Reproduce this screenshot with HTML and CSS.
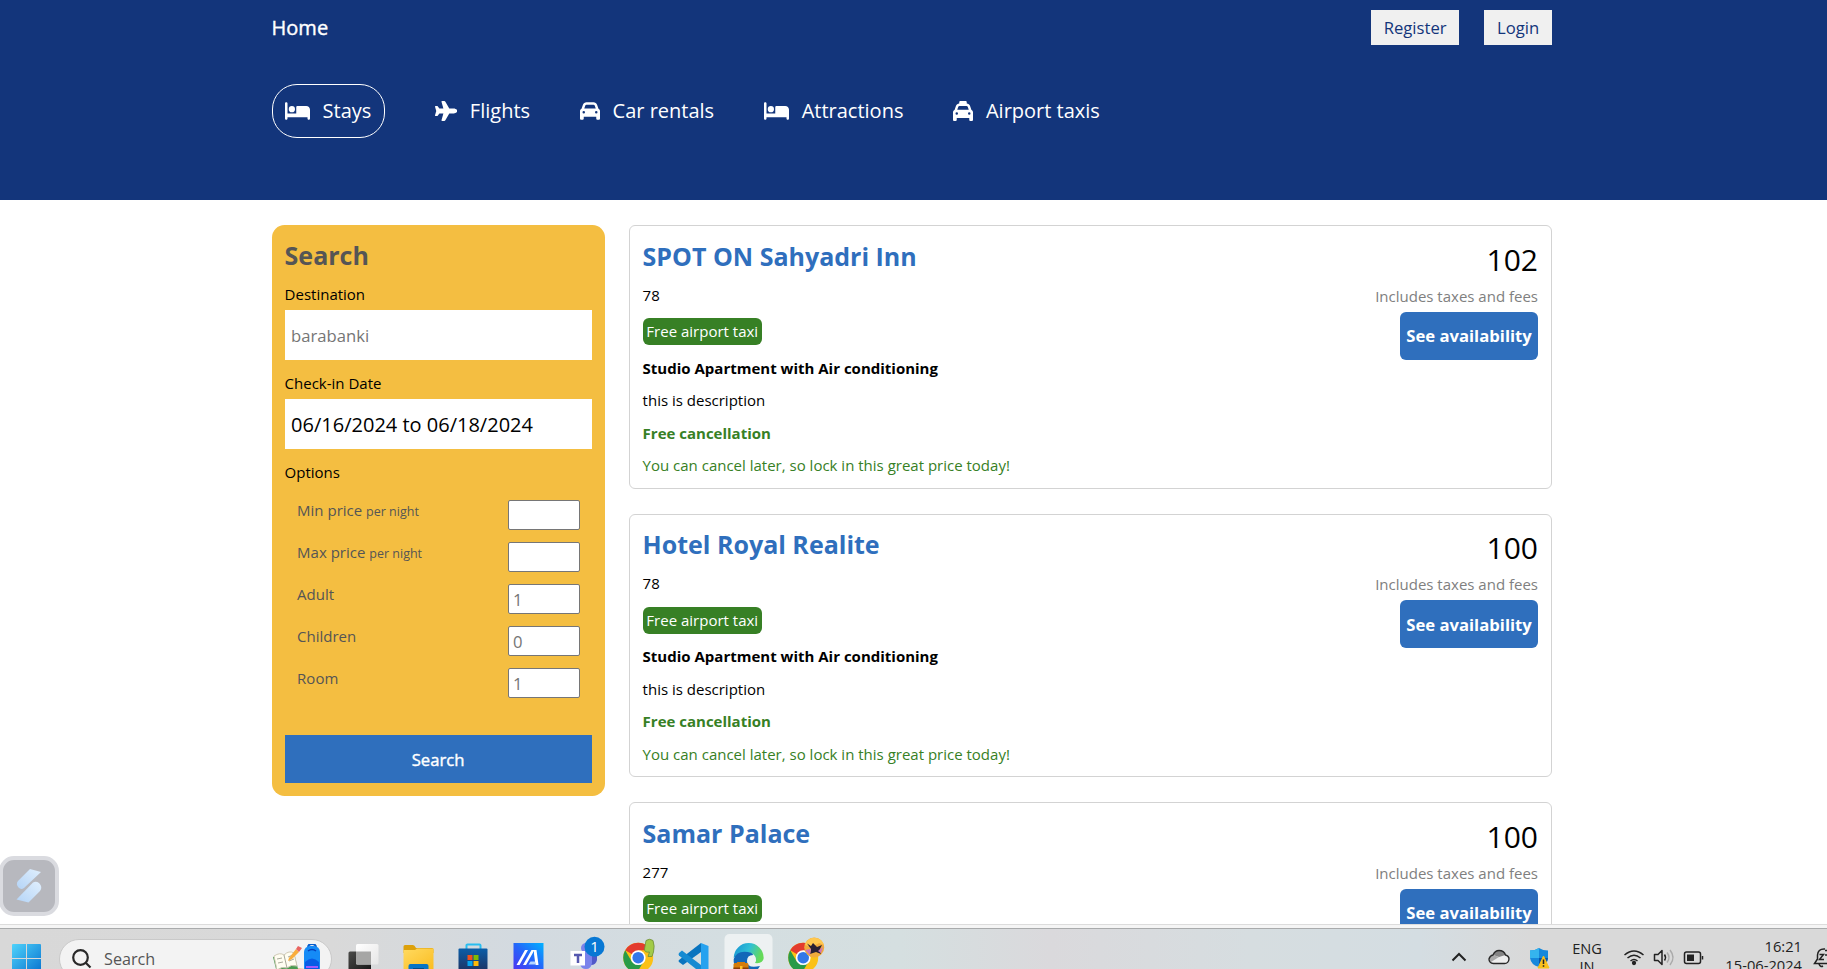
FILE: index.html
```html
<!DOCTYPE html>
<html lang="en">
<head>
<meta charset="utf-8">
<title>Hotels</title>
<link rel="stylesheet" href="styles.css">
</head>
<body>
<div class="viewport">
  <header class="header">
    <div class="container">
      <nav class="navbar">
        <span class="brand">Home</span>
        <div class="nav-actions"><button class="nav-button">Register</button><button class="nav-button login">Login</button></div>
      </nav>
      <div class="tabs">
        <div class="tab active"><svg width="25" height="20" viewBox="0 0 640 512"><path d="M32 32c17.7 0 32 14.3 32 32V320H288V160c0-17.7 14.3-32 32-32H544c53 0 96 43 96 96V448c0 17.7-14.3 32-32 32s-32-14.3-32-32V416H64v32c0 17.7-14.3 32-32 32s-32-14.3-32-32V64C0 46.3 14.3 32 32 32zm144 96a80 80 0 1 1 0 160 80 80 0 1 1 0-160z"/></svg><span>Stays</span></div>
        <div class="tab"><svg width="22.5" height="20" viewBox="0 0 576 512"><path d="M482.3 192c34.2 0 93.7 29 93.7 64c0 36-59.5 64-93.7 64l-116.6 0L265.2 495.9c-5.7 10-16.3 16.1-27.8 16.1l-56.2 0c-10.6 0-18.3-10.2-15.4-20.4l49-171.6L112 320 68.8 377.6c-3 4-7.8 6.4-12.8 6.4l-42 0c-7.8 0-14-6.3-14-14c0-1.3 .2-2.6 .5-3.9L32 256 .5 145.9c-.4-1.3-.5-2.6-.5-3.9c0-7.8 6.3-14 14-14l42 0c5 0 9.8 2.4 12.8 6.4L112 192l102.9 0-49-171.6C162.9 10.2 170.6 0 181.2 0l56.2 0c11.5 0 22.1 6.2 27.8 16.1L365.7 192l116.6 0z"/></svg><span>Flights</span></div>
        <div class="tab"><svg width="20" height="20" viewBox="0 0 512 512"><path d="M135.2 117.4L109.1 192H402.9l-26.1-74.6C372.3 104.6 360.2 96 346.6 96H165.4c-13.6 0-25.7 8.6-30.2 21.4zM39.6 196.8L74.8 96.3C88.3 57.8 124.6 32 165.4 32H346.6c40.8 0 77.1 25.8 90.6 64.3l35.2 100.5c23.2 9.6 39.6 32.5 39.6 59.2V400v48c0 17.7-14.3 32-32 32H448c-17.7 0-32-14.3-32-32V400H96v48c0 17.7-14.3 32-32 32H32c-17.7 0-32-14.3-32-32V400 256c0-26.7 16.4-49.6 39.6-59.2zM128 288a32 32 0 1 0 -64 0 32 32 0 1 0 64 0zm288 32a32 32 0 1 0 0-64 32 32 0 1 0 0 64z"/></svg><span>Car rentals</span></div>
        <div class="tab"><svg width="25" height="20" viewBox="0 0 640 512"><path d="M32 32c17.7 0 32 14.3 32 32V320H288V160c0-17.7 14.3-32 32-32H544c53 0 96 43 96 96V448c0 17.7-14.3 32-32 32s-32-14.3-32-32V416H64v32c0 17.7-14.3 32-32 32s-32-14.3-32-32V64C0 46.3 14.3 32 32 32zm144 96a80 80 0 1 1 0 160 80 80 0 1 1 0-160z"/></svg><span>Attractions</span></div>
        <div class="tab"><svg width="20" height="20" viewBox="0 0 512 512"><path d="M192 0c-17.7 0-32 14.3-32 32V64v.2c-38.6 2.2-72.3 27.3-85.2 64.1L39.6 228.8C16.4 238.4 0 261.3 0 288V432v48c0 17.7 14.3 32 32 32H64c17.7 0 32-14.3 32-32V432H416v48c0 17.7 14.3 32 32 32h32c17.7 0 32-14.3 32-32V432 288c0-26.7-16.4-49.6-39.6-59.2L437.2 128.3c-12.9-36.8-46.6-62-85.2-64.1V64 32c0-17.7-14.3-32-32-32H192zM165.4 128H346.6c13.6 0 25.7 8.6 30.2 21.4L402.9 224H109.1l26.1-74.6c4.5-12.8 16.6-21.4 30.2-21.4zM96 288a32 32 0 1 1 0 64 32 32 0 1 1 0-64zm288 32a32 32 0 1 1 64 0 32 32 0 1 1 -64 0z"/></svg><span>Airport taxis</span></div>
      </div>
    </div>
  </header>

  <main class="container content">
    <aside class="search">
      <h1 class="search-title">Search</h1>
      <div class="field"><label>Destination</label><input class="text-input" type="text" placeholder="barabanki"></div>
      <div class="field"><label>Check-in Date</label><div class="date-box">06/16/2024 to 06/18/2024</div></div>
      <div class="field">
        <label>Options</label>
        <div class="options">
          <div class="option"><span>Min price <small>per night</small></span><input type="text"></div>
          <div class="option"><span>Max price <small>per night</small></span><input type="text"></div>
          <div class="option"><span>Adult</span><input type="text" placeholder="1"></div>
          <div class="option"><span>Children</span><input type="text" placeholder="0"></div>
          <div class="option"><span>Room</span><input type="text" placeholder="1"></div>
        </div>
      </div>
      <button class="search-button">Search</button>
    </aside>

    <section class="results">
      <article class="hotel">
        <div class="info"><h2>SPOT ON Sahyadri Inn</h2><span>78</span><span class="badge">Free airport taxi</span><b>Studio Apartment with Air conditioning</b><span>this is description</span><b class="green">Free cancellation</b><span class="green">You can cancel later, so lock in this great price today!</span></div>
        <div class="offer"><span class="price">102</span><span class="tax">Includes taxes and fees</span><button class="check">See availability</button></div>
      </article>
      <article class="hotel">
        <div class="info"><h2>Hotel Royal Realite</h2><span>78</span><span class="badge">Free airport taxi</span><b>Studio Apartment with Air conditioning</b><span>this is description</span><b class="green">Free cancellation</b><span class="green">You can cancel later, so lock in this great price today!</span></div>
        <div class="offer"><span class="price">100</span><span class="tax">Includes taxes and fees</span><button class="check">See availability</button></div>
      </article>
      <article class="hotel">
        <div class="info"><h2>Samar Palace</h2><span>277</span><span class="badge">Free airport taxi</span></div>
        <div class="offer"><span class="price">100</span><span class="tax">Includes taxes and fees</span><button class="check">See availability</button></div>
      </article>
    </section>
  </main>

  <div class="widget">
    <svg width="60" height="60" viewBox="0 0 60 60">
      <defs><linearGradient id="wg" x1="0" y1="1" x2="1" y2="0"><stop offset="0" stop-color="#b4d4f7"/><stop offset="1" stop-color="#e0effd"/></linearGradient></defs>
      <path d="M31 13L42 16 25 32Q22 34 19.500 31.500 16.500 28 19 25Z" fill="url(#wg)"/>
      <path d="M17.500 43.500L34 26.500Q37 25 40 27 44 31 41 35L29.500 46.500Z" fill="url(#wg)"/>
    </svg>
  </div>
</div>

<div class="window-edge"></div>
<footer class="taskbar">
  <svg class="start" width="30" height="41" viewBox="0 0 30 41">
    <defs><linearGradient id="st" gradientUnits="userSpaceOnUse" x1="0" y1="16" x2="29" y2="45"><stop offset="0" stop-color="#4fd3fb"/><stop offset="1" stop-color="#0872cf"/></linearGradient></defs>
    <path d="M1 16H14V30H0V17Q0 16 1 16ZM15 16H28Q29 16 29 17V30H15ZM0 31H14V41H0ZM15 31H29V41H15Z" fill="url(#st)"/>
  </svg>
  <div class="task-search">
    <svg width="20" height="20" viewBox="0 0 20 20" fill="none" stroke="#292929" stroke-width="2.2"><circle cx="8.500" cy="8.500" r="7.300"/><path d="M13.500 13.500L18.500 18.500"/></svg>
    <span>Search</span>
    <svg class="doodle" width="60" height="30" viewBox="0 0 60 30">
      <path d="M0 30Q9 24 22 24 42 24 52 30Z" fill="#e9bd86"/>
      <path d="M4 13L25 9 29 25 8 29Z" fill="#4b9b50"/><path d="M5 12Q11 8 15 11 20 6 25 9L28 22Q22 20 18 24 13 22 8 26Z" fill="#fffdf1" stroke="#cfc9b6"/><path d="M15 11L18 24M8 15L13 14M9 19L14 18M19 13L24 11M20 17L25 15" stroke="#a9a99b"/>
      <path d="M20 14L27 5 30 8 23 15 19 17Z" fill="#f9ad3d"/><path d="M27 5L29 2 33 4 30 8Z" fill="#e96462"/>
      <path d="M39 4Q39 0 43 0T47 4" fill="none" stroke="#075ccc" stroke-width="2"/><rect x="35" y="2" width="16" height="28" rx="6" fill="#158bf6"/><path d="M39 7Q43 4 47 7" fill="none" stroke="#063fbc" stroke-width="1.500"/><path d="M36 18Q43 11 50 18V30H36Z" fill="#075ce5"/><path d="M37 23H49" stroke="#9f5bff" stroke-width="2"/>
    </svg>
  </div>
  <div class="apps">
    <svg class="app" viewBox="0 0 55 41"><defs><linearGradient id="tv" x2="1" y2="1"><stop stop-color="#4b4b49"/><stop offset="1" stop-color="#151515"/></linearGradient><linearGradient id="tw" x2="1" y2="1"><stop stop-color="#fff"/><stop offset="1" stop-color="#e6e6e6"/></linearGradient></defs><rect x="12.500" y="23.500" width="22.500" height="20" rx="1.500" fill="url(#tv)"/><rect x="20" y="16" width="22.500" height="20.500" rx="1.500" fill="url(#tw)"/><path d="M20 23.500H35V36.500H21.500Q20 36.500 20 35Z" fill="#a6a6a5"/></svg>
    <svg class="app" viewBox="0 0 55 41"><defs><linearGradient id="fo" x2="1" y2="1"><stop stop-color="#ffda60"/><stop offset="1" stop-color="#fbbd22"/></linearGradient></defs><path d="M12.500 18.500Q12.500 17 14 17H22Q23.500 17 25 20H41Q42.500 20 42.500 21.500V25H12.500Z" fill="#dda10b"/><path d="M12.500 22H24L26 20.500H42.500V41H12.500Z" fill="url(#fo)"/><path d="M17.500 41V38Q17.500 36 19.500 36H35.500Q37.500 36 37.500 38V41Z" fill="#0874c6"/><path d="M22 41V40H33V41Z" fill="#064c86"/></svg>
    <svg class="app" viewBox="0 0 55 41"><defs><linearGradient id="ms" x2="0" y2="1"><stop stop-color="#0b5ea8"/><stop offset="1" stop-color="#1c3769"/></linearGradient></defs><path d="M20.500 22V17Q20.500 16.500 21.500 16.500H33.500Q34.500 16.500 34.500 17.500V22" fill="none" stroke="#29bdf0" stroke-width="2"/><path d="M12.500 21.500Q12.500 20.500 13.500 20.500H40.500Q41.500 20.500 41.500 21.500V41H12.500Z" fill="url(#ms)"/><path fill="#f1511b" d="M21.500 27h5v5h-5z"/><path fill="#80bb00" d="M27.500 27h5v5h-5z"/><path fill="#05a6f0" d="M21.500 33h5v5h-5z"/><path fill="#ffba08" d="M27.500 33h5v5h-5z"/></svg>
    <svg class="app" viewBox="0 0 55 41"><defs><linearGradient id="ma" x1="0" y1="1" x2="1" y2="0"><stop stop-color="#4b35f2"/><stop offset=".5" stop-color="#2467fa"/><stop offset="1" stop-color="#00b2ff"/></linearGradient></defs><path d="M12.500 15H42.500V41H12.500Z" fill="url(#ma)"/><path d="M15.500 37L24 22H27L18.500 37ZM22 37L30.500 22H33.500L25 37ZM33 22H35.500L37.500 37H34.500L33 26Z" fill="#fff"/><path d="M29.500 33.500H34V36.500H27.500Z" fill="#b4d5ff"/></svg>
    <svg class="app" viewBox="0 0 55 41"><circle cx="30" cy="20" r="5" fill="#7b83eb"/><path d="M34 25H41V32Q40 37 35 37Z" fill="#5059c9"/><path d="M24 25H36V35Q35 41 30 41 25 41 24 36Z" fill="#7b83eb"/><rect x="14.500" y="23" width="14.500" height="14.500" fill="#fff"/><path d="M18 27H26M22 27V35" stroke="#5558af" stroke-width="2.500"/><circle cx="38.500" cy="18.700" r="10" fill="#0878d4"/><text x="38.500" y="24" text-anchor="middle" class="badge-text">1</text></svg>
    <svg class="app" viewBox="0 0 55 41"><g id="chrome"><circle cx="27.200" cy="29.700" r="15" fill="#fbc116"/><path d="M27.200 29.700L14.200 22.200A15 15 0 0 1 40.200 22.200H27.200Z" fill="#e33b2e"/><path d="M14.200 22.200A15 15 0 0 0 26 44.600L33 33 27.200 29.700 20.700 33.500Z" fill="#289b48"/><circle cx="27.200" cy="29.700" r="7.400" fill="#fff"/><circle cx="27.200" cy="29.700" r="5.800" fill="#3478e8"/></g><path d="M35 12.500Q38.500 10 42 12.500 44 18 42.500 24L41 28.500H37L38.500 24Q33.500 25 33.500 21Z" fill="#a2cb48" stroke="#6d8d39" stroke-width=".8"/></svg>
    <svg class="app" viewBox="0 0 55 41"><path d="M35 15L42.500 18V41H35Z" fill="#26a2ef"/><path d="M35 15V24L17 37 13 34Q12 33 13 32Z" fill="#0874bf"/><path d="M13 25L16 22.500 35 37V41H30L13 27.500Q12 26 13 25Z" fill="#168bd2"/></svg>
    <svg class="app" viewBox="0 0 55 41"><defs><linearGradient id="ed" x2="1" y2=".3"><stop stop-color="#1591d3"/><stop offset=".55" stop-color="#2fbfd5"/><stop offset="1" stop-color="#65da59"/></linearGradient></defs><rect x="3.500" y="6" width="48" height="45" rx="5" fill="#edf1f2"/><path d="M12.700 30A15 15 0 0 1 42.700 30Q42 36 34 35 37 30 32 26 22 21 12.700 30Z" fill="url(#ed)"/><path d="M12.700 31Q16 22 27 24 32 25 32 27 26 27 26 33 26 41 39 38L37 41H17Q12 37 12.700 31Z" fill="#1267b8"/><path d="M12.500 36.500Q12.500 35 14 35H16V34H24V35H26Q27.500 35 27.500 36.500V41H12.500Z" fill="#d47c0b"/><path d="M12.500 39.500H27.500V41H12.500Z" fill="#8b3c08"/><path d="M19 38h2.500v3H19z" fill="#ffc328"/></svg>
    <svg class="app" viewBox="0 0 55 41"><use href="#chrome"/><circle cx="38.200" cy="19.500" r="10" fill="#f1aa3d"/><path d="M29 17Q31 10 38 9.700 46 10 48 17L43 15 36 19Z" fill="#ffc84f"/><path d="M31 15.500L35 18 37 15 41 19 46 17 43.500 22 45 26 40 24 34 26 35 21Z" fill="#292034"/><path d="M29 22L35 21 34 27ZM42 23L47 19 45 25Z" fill="#cb75bb"/></svg>
  </div>
  <div class="tray">
    <svg width="40" height="41" viewBox="0 0 40 41"><path d="M13.500 32.500L20 26 26.500 32.500" fill="none" stroke="#222" stroke-width="2"/></svg>
    <svg width="40" height="41" viewBox="0 0 40 41"><path d="M14.500 35.500Q10 35 10 31 11 27.500 14 27 16 22.500 20 22.500 25 22.500 26.500 27 30 28 30 31 29.500 35.500 25.500 35.500Z" fill="#eee"/><path d="M14 27Q16 22.500 20 22.500 25 22.500 26.500 27L20 29Z" fill="#858585"/><path d="M11 33Q10 28 14 27L20 29 12 34Z" fill="#aaa"/><path d="M14.500 35.500Q10 35 10 31 11 27.500 14 27 16 22.500 20 22.500 25 22.500 26.500 27 30 28 30 31 29.500 35.500 25.500 35.500Z" fill="none" stroke="#292929" stroke-width="1.400"/></svg>
    <svg width="40" height="41" viewBox="0 0 40 41"><path d="M20 20Q24 22.500 29 22.500V31Q28 37 20 39 12 37 11 30V22.500Q16 22.500 20 20Z" fill="#1688dc"/><path d="M20 20Q16 22.500 11 22.500V30H20Z" fill="#35b4ee"/><path d="M20 30H29Q28 37 20 39Z" fill="#0b55a6"/><path d="M24.500 28L30 40H19Z" fill="#fbc11b" stroke="#fbc11b" stroke-linejoin="round"/><path d="M24.500 31.500V36M24.500 37.200V38.800" stroke="#222" stroke-width="1.500"/></svg>
    <div class="lang"><span>ENG</span><span>IN</span></div>
    <svg width="95" height="41" viewBox="0 0 95 41" fill="none" stroke="#222" stroke-width="1.500"><path d="M9.500 27Q19 19 28.500 27M12.500 30Q19 24.500 25.500 30M15.500 33Q19 30 22.500 33" /><circle cx="19" cy="35" r="1.400" fill="#222"/><path d="M39.500 26.500H43L47 22.500V36.500L43 32.500H39.500Z" stroke-linejoin="round"/><path d="M49.500 26.500Q51.500 29.500 49.500 32.500"/><path d="M52 24.500Q56 29.500 52 34.500M55 22Q61 29.500 55 37" stroke="#aaa"/><rect x="69.500" y="24" width="16" height="11.500" rx="2"/><path d="M72 26.500H79V33H72Z" fill="#222" stroke="none"/><path d="M87.500 28V31.500"/></svg>
    <div class="clock"><span>16:21</span><span>15-06-2024</span></div>
    <svg class="bell" width="14" height="41" viewBox="0 0 14 41" fill="none" stroke="#222" stroke-width="1.500"><path d="M12 21Q5 20.500 4.500 27V31L1.500 35.500H14M6 36Q7.500 39.500 10 38"/><path d="M6.500 26.500H10.500L6.500 31.500H11M12 22.500H14M12 27H14"/></svg>
  </div>
</footer>
</body>
</html>
```
FILE: styles.css
```css
* { box-sizing: border-box; }
body { margin: 0; height: 969px; overflow: hidden; display: flex; flex-direction: column; background: #fff; font-family: "Open Sans", "Noto Sans", sans-serif; font-size: 15px; color: #000; }
button, input { font-family: inherit; }
h1, h2 { margin: 0; }
svg { display: block; flex: none; }
.viewport { position: relative; height: 924px; flex: none; overflow: hidden; }
.container { width: 1280px; margin: 0 0 0 271.6px; }
.header { height: 200px; background: #13357b; color: #fff; }
.navbar { height: 55px; display: flex; align-items: center; justify-content: space-between; }
.brand { font-size: 20px; font-weight: 500; -webkit-text-stroke: 0.4px #fff; }
.nav-actions { display: flex; gap: 25px; }
.nav-button { width: 88px; height: 35px; border: 0; padding: 0 0 0 1px; background: #f0f0f0; color: #13357b; font-size: 16.67px; }
.nav-button.login { width: 68px; }
.tabs { display: flex; gap: 50px; margin-top: 29px; font-size: 20px; }
.tab { display: flex; align-items: center; gap: 12.5px; height: 54px; }
.tab svg { fill: #fff; }
.tab span { line-height: 27px; padding-bottom: 2px; }
.tab.active { border: 1px solid #fff; border-radius: 25px; padding: 0 12.5px; }
.content { display: flex; gap: 24px; padding-top: 25px; align-items: flex-start; }

.search { width: 333px; height: 571px; background: #f4be41; border-radius: 12.5px; padding: 12.5px 13px; flex: none; }
.search-title { font-size: 25px; line-height: 34px; color: #555; margin-bottom: 12.5px; }
.field { display: flex; flex-direction: column; gap: 6px; margin-bottom: 13px; }
.field label { line-height: 20px; height: 20px; }
.text-input, .date-box { width: 307px; height: 50px; border: 0; padding: 0 6.5px; background: #fff; }
.text-input { font-size: 16.67px; }
.text-input::placeholder, .option input::placeholder { color: #757575; opacity: 1; }
.date-box { font-size: 20px; line-height: 51px; }
.options { padding: 12px 12px 0 12.5px; display: flex; flex-direction: column; gap: 12px; }
.option { display: flex; justify-content: space-between; height: 30px; color: #555; line-height: 20px; }
.option small { font-size: 12.5px; }
.option input { width: 72px; height: 30px; border: 1px solid #767676; border-radius: 2px; padding: 2px 4.5px; font-size: 16.67px; background: #fff; }
.search-button { display: block; width: 307px; height: 48px; border: 0; margin-top: 37px; background: #2f6fbd; color: #fff; font-size: 16.67px; font-weight: 500; -webkit-text-stroke: 0.4px #fff; }

.results { width: 923px; display: flex; flex-direction: column; gap: 25px; }
.hotel { height: 263.6px; flex: none; border: 1px solid lightgray; border-radius: 6px; padding: 12.8px 12.6px 12.8px 13px; display: flex; justify-content: space-between; }
.info { display: flex; flex-direction: column; gap: 12px; align-items: flex-start; line-height: 20.4px; }
.info h2 { font-size: 25px; line-height: 34px; color: #2f6fbd; }
.badge { height: 27px; line-height: 27px; margin: 1px 0 0.5px; padding: 0 3.75px; border-radius: 6px; background: #378025; color: #fff; }
.green { color: #378025; }
.offer { display: flex; flex-direction: column; align-items: flex-end; }
.price { font-size: 30px; line-height: 41px; }
.tax { color: gray; line-height: 20px; margin: 6px 0; }
.check { width: 138px; height: 48px; border: 0; border-radius: 6px; padding: 0; background: #2f6fbd; color: #fff; font-size: 16.67px; font-weight: 700; }

.widget { position: absolute; left: -1px; top: 856px; width: 60px; height: 60px; border: 4px solid #dadbe0; border-radius: 15px; background: #b7b8be; }
.widget svg { margin: -4px; }

.window-edge { height: 4px; flex: none; background: #f5f5f5; border-top: 1px solid #dcdcdc; }
.taskbar { height: 41px; flex: none; overflow: hidden; display: flex; border-top: 1px solid #a9abac; background: linear-gradient(90deg, #d8d8d8 0, #d9d9d9 330px, #d3dae0 520px, #d4dee1 740px, #d5dfe0 900px, #dad9dc 1050px, #d6dde0 1250px, #d4dde2 1420px, #d9d9d9 1530px, #d9d9d9 100%); }
.taskbar svg { margin-top: -1px; }
.start { margin-left: 12px; }
.task-search { width: 273px; height: 40px; margin: 10px 3.5px 0 17px; border-radius: 20px; background: #f3f3f3; border: 1px solid #c9c9c9; display: flex; align-items: flex-start; flex: none; padding-left: 12px; }
.task-search span { font-size: 16.2px; color: #555; line-height: 22px; margin: 8px 0 0 12px; width: 50px; }
.task-search > svg:first-child { margin-top: 9px; }
.task-search .doodle { margin: 4px 0 0 115px; }
.apps { display: flex; flex: none; }
.app { width: 55px; height: 41px; }
.badge-text { font-size: 15px; fill: #fff; }
.tray { margin-left: 608.5px; display: flex; flex: none; color: #222; }
.lang { width: 56px; display: flex; flex-direction: column; align-items: center; line-height: 18px; font-size: 14.6px; padding-top: 10px; }
.clock { width: 92px; display: flex; flex-direction: column; align-items: flex-end; line-height: 19px; font-size: 14.7px; padding-top: 8px; }
.taskbar .bell { margin-left: 11px; }
```
